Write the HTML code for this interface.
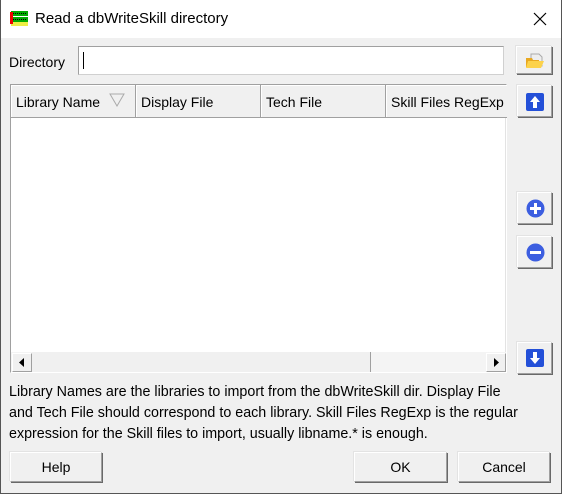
<!DOCTYPE html>
<html><head><meta charset="utf-8"><style>
*{box-sizing:border-box;margin:0;padding:0}
body{width:562px;height:494px;background:#f0f0f0;font-family:"Liberation Sans",Arial,sans-serif;font-size:14px;color:#000;position:relative;overflow:hidden}
.win{position:absolute;left:0;top:0;width:562px;height:494px;border:1px solid #555;border-top:none}
.title{position:absolute;left:0;top:0;width:562px;height:38px;background:#fff}
.title span{position:absolute;left:35px;top:10px;font-size:15px}
.abs{position:absolute}
.btn{position:absolute;background:#f0f0f0;border-top:1px solid #fff;border-left:1px solid #fff;border-right:1px solid #a0a0a0;border-bottom:1px solid #a0a0a0;box-shadow:1px 1px 0 #696969,-1px -1px 0 #e3e3e3;text-align:center}
.hdr{position:absolute;top:0;height:33px;border-right:1px solid #a0a0a0;border-bottom:1px solid #a0a0a0;box-shadow:inset 1px 1px 0 #fff;padding:9px 0 0 5px;background:#f0f0f0;white-space:nowrap;overflow:hidden}
</style></head><body>
<div class="title">
<svg class="abs" style="left:10px;top:10px" width="20" height="18"><rect x="1" y="1" width="17" height="5" fill="#0a0"/><rect x="1" y="7" width="17" height="5" fill="#0a0"/><rect x="1" y="12" width="17" height="4" fill="#ee4"/><rect x="0" y="2" width="3" height="12" fill="#e00"/><line x1="3" y1="3.5" x2="17" y2="3.5" stroke="#000" stroke-dasharray="1 1"/><line x1="3" y1="9.5" x2="17" y2="9.5" stroke="#000" stroke-dasharray="1 1"/></svg>
<span>Read a dbWriteSkill directory</span>
<svg class="abs" style="left:533px;top:12px" width="14" height="14"><path d="M1 1L13 13M13 1L1 13" stroke="#000" stroke-width="1.2"/></svg>
</div>
<div class="win"></div>
<div class="abs" style="left:9px;top:54px">Directory</div>
<div class="abs" style="left:78px;top:46px;width:426px;height:29px;background:#fff;border:1px solid #d0d0d0;border-top-color:#a0a0a0;border-left-color:#a0a0a0"><div class="abs" style="left:4px;top:5px;width:1px;height:17px;background:#000"></div></div>
<div class="btn" style="left:516px;top:46px;width:36px;height:28px"><svg class="abs" style="left:8px;top:6px" width="20" height="16"><path d="M6 1h8l3 3v9H6z" fill="#eee" stroke="#aaa"/><path d="M1 5h6l1 2h6v7H1z" fill="#e8a820"/><path d="M3 8h16l-3 7H1z" fill="#fcd24a"/></svg></div>
<div class="abs" style="left:10px;top:84px;width:497px;height:289px;background:#fff;border:1px solid #a0a0a0;border-right-color:#fff;border-bottom-color:#fff;box-shadow:inset -1px -1px 0 #e3e3e3">
<div class="hdr" style="left:0;width:125px">Library Name<svg class="abs" style="left:98px;top:8px" width="16" height="14"><path d="M1 1h14L8 13z" fill="none" stroke="#aaa"/></svg></div>
<div class="hdr" style="left:125px;width:125px">Display File</div>
<div class="hdr" style="left:250px;width:125px">Tech File</div>
<div class="hdr" style="left:375px;width:121px;border-right:none">Skill Files RegExp</div>
<div class="abs" style="left:0;top:267px;width:495px;height:20px;background:#f4f4f4">
<div class="btn" style="left:1px;top:1px;width:20px;height:19px;box-shadow:none"><svg width="18" height="17"><path d="M11 4v9l-5-4.5z"/></svg></div>
<div class="abs" style="left:21px;top:0;width:339px;height:20px;border-right:1px solid #a0a0a0;background:#f0f0f0"></div>
<div class="btn" style="left:475px;top:1px;width:20px;height:19px;box-shadow:none"><svg width="18" height="17"><path d="M7 4v9l5-4.5z"/></svg></div>
</div>
</div>
<div class="btn" style="left:517px;top:85px;width:35px;height:32px"><svg class="abs" style="left:8px;top:7px" width="18" height="18"><rect width="18" height="18" rx="2" fill="#2450d8"/><path d="M9 3l5 6h-3v6H7V9H4z" fill="#fff"/></svg></div>
<div class="btn" style="left:517px;top:192px;width:35px;height:32px"><svg class="abs" style="left:8px;top:6px" width="19" height="19"><circle cx="9.5" cy="9.5" r="9" fill="#3c5ee0"/><path d="M4 9.5h11M9.5 4v11" stroke="#fff" stroke-width="3"/></svg></div>
<div class="btn" style="left:517px;top:236px;width:35px;height:32px"><svg class="abs" style="left:8px;top:6px" width="19" height="19"><circle cx="9.5" cy="9.5" r="9" fill="#3c5ee0"/><path d="M4 9.5h11" stroke="#fff" stroke-width="3"/></svg></div>
<div class="btn" style="left:517px;top:342px;width:35px;height:32px"><svg class="abs" style="left:8px;top:6px" width="18" height="18"><rect width="18" height="18" rx="2" fill="#2450d8"/><path d="M9 15l5-6h-3V3H7v6H4z" fill="#fff"/></svg></div>
<div class="abs" style="left:9px;top:382px;line-height:21px;width:553px;font-size:14.3px">Library Names are the libraries to import from the dbWriteSkill dir. Display File<br>and Tech File should correspond to each library. Skill Files RegExp is the regular<br>expression for the Skill files to import, usually libname.* is enough.</div>
<div class="btn" style="left:10px;top:452px;width:92px;height:30px;line-height:28px">Help</div>
<div class="btn" style="left:354px;top:452px;width:93px;height:30px;line-height:28px">OK</div>
<div class="btn" style="left:458px;top:452px;width:92px;height:30px;line-height:28px">Cancel</div>
</body></html>
